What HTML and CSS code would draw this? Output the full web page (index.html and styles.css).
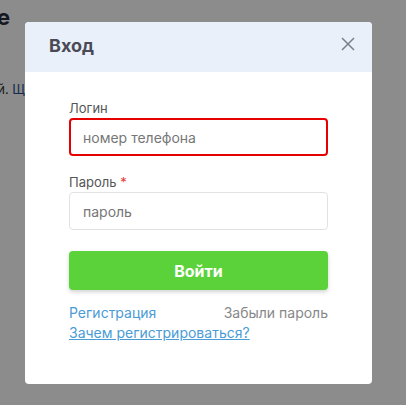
FILE: index.html
```html
<!DOCTYPE html>
<html lang="ru">
<head>
<meta charset="utf-8">
<link rel="stylesheet" href="styles.css">
</head>
<body>
<div class="page">
  <h2 class="page-title"><span>Поступление</span></h2>
  <p class="page-text"><span>Добро пожаловать на сайт компаний.&nbsp;</span><a href="#">Щел</a></p>
</div>
<div class="overlay"></div>
<div class="modal">
  <div class="modal-header">
    <h1 class="modal-title">Вход</h1>
    <svg class="close" width="14" height="14" viewBox="0 0 14 14"><path d="M1 1L13 13M13 1L1 13" stroke="#7b7f88" stroke-width="1.5" fill="none"/></svg>
  </div>
  <div class="modal-body">
    <label class="label">Логин</label>
    <div class="input input-error">номер телефона</div>
    <label class="label label-2">Пароль <span class="req">*</span></label>
    <div class="input">пароль</div>
    <button class="btn">Войти</button>
    <div class="links">
      <a class="link" href="#">Регистрация</a>
      <a class="forgot" href="#">Забыли пароль</a>
    </div>
    <a class="why" href="#">Зачем регистрироваться?</a>
  </div>
</div>
</body>
</html>
```
FILE: styles.css
```css
* { box-sizing: border-box; }
html, body { margin: 0; padding: 0; }
body {
  width: 406px;
  height: 405px;
  overflow: hidden;
  background: #fff;
  font-family: Inter, "Noto Sans", sans-serif;
  position: relative;
}
.page {
  padding-top: 3px;
}
.page-title {
  margin: 0;
  width: 10px;
  display: flex;
  justify-content: flex-end;
  white-space: nowrap;
  font-size: 22px;
  font-weight: 700;
  color: #2b2b3a;
  line-height: 28px;
}
.page-text {
  margin: 50px 0 0;
  width: 40px;
  display: flex;
  justify-content: flex-end;
  white-space: nowrap;
  font-size: 13px;
  color: #333;
}
.page-text a { color: #2c4f8a; text-decoration: none; }
.overlay {
  position: absolute;
  inset: 0;
  background: rgba(0, 0, 0, 0.45);
}
.modal {
  position: absolute;
  left: 25px;
  top: 22px;
  width: 347px;
  height: 362px;
  background: #fff;
  border-radius: 4px;
  overflow: hidden;
}
.modal-header {
  height: 50px;
  background: #e9f0f9;
  display: flex;
  align-items: center;
  justify-content: space-between;
  padding: 0 17px 3px 24px;
}
.modal-title {
  margin: 0;
  font-size: 18px;
  font-weight: 700;
  color: #4a4a56;
}
.close { display: block; margin-top: -4px; }
.modal-body {
  padding: 27px 44px 0;
  display: flex;
  flex-direction: column;
}
.label {
  font-size: 13px;
  color: #555;
  line-height: 18px;
  margin-bottom: 1px;
}
.label-2 { margin-top: 17px; }
.req { color: #e53935; }
.input {
  height: 38px;
  border: 1px solid #e2e2e2;
  border-radius: 4px;
  padding: 0 13px;
  display: flex;
  align-items: center;
  font-size: 14px;
  color: #777;
}
.input-error {
  border: 2px solid #e60000;
  padding: 0 12px;
}
.btn {
  margin-top: 21px;
  height: 39px;
  border: none;
  border-radius: 4px;
  background: #5cd23a;
  color: #fff;
  font-family: inherit;
  font-size: 16px;
  font-weight: 700;
  box-shadow: 0 2px 4px rgba(0,0,0,0.18);
}
.links {
  margin-top: 14px;
  display: flex;
  justify-content: space-between;
  font-size: 14px;
  line-height: 18px;
}
.link { color: #4a9bd6; text-decoration: none; }
.forgot { color: #888; text-decoration: none; }
.why {
  margin-top: 2px;
  font-size: 14px;
  line-height: 18px;
  color: #4a9bd6;
  text-decoration: underline;
  align-self: flex-start;
}
```
